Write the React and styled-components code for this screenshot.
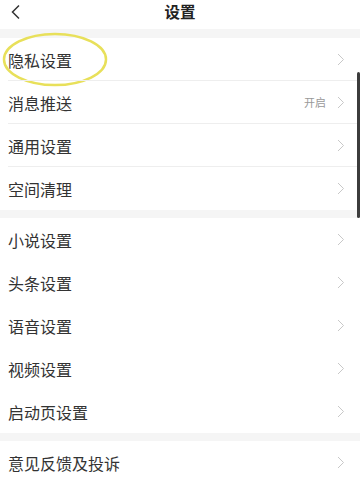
import React from "react";
import styled, { createGlobalStyle } from "styled-components";

const Global = createGlobalStyle`
  html, body { margin: 0; padding: 0; background: #fff; }
  body { font-family: "Noto Sans CJK SC", "Noto Sans", sans-serif; -webkit-font-smoothing: antialiased; }
  * { box-sizing: border-box; }
`;

const Page = styled.div`
  width: 360px;
  height: 483px;
  overflow: hidden;
  position: relative;
  background: #fff;
`;

const Header = styled.div`
  height: 29px;
  display: flex;
  align-items: center;
  justify-content: center;
  position: relative;
`;

const Back = styled.div`
  position: absolute;
  left: 10px;
  top: 4px;
  width: 12px;
  height: 16px;
  display: flex;
`;

const Title = styled.div`
  font-size: 15.5px;
  font-weight: 700;
  color: #222;
  line-height: 1;
  margin-top: -5px;
`;

const Band = styled.div`
  height: ${(p) => p.$h}px;
  background: #f5f5f5;
`;

const Section = styled.div`
  display: flex;
  flex-direction: column;
`;

const Row = styled.div`
  height: 43px;
  display: flex;
  align-items: center;
  padding: 0 15px 0 8px;
  position: relative;
  &::after {
    content: "";
    display: ${(p) => (p.$divider ? "block" : "none")};
    position: absolute;
    left: 8px;
    right: 0;
    bottom: 0;
    height: 1px;
    background: #eeeeee;
  }
`;

const Label = styled.div`
  flex: 1;
  font-size: 16px;
  color: #333;
  line-height: 1;
`;

const Value = styled.div`
  font-size: 11px;
  color: #999;
  margin-right: 11px;
  line-height: 1;
`;

const Chevron = styled.svg`
  width: 8px;
  height: 13px;
  display: block;
`;

const Circle = styled.svg`
  position: absolute;
  left: 2px;
  top: -6px;
  width: 106px;
  height: 55px;
  pointer-events: none;
`;

const ScrollThumb = styled.div`
  position: absolute;
  right: 0;
  top: 72px;
  width: 3px;
  height: 146px;
  background: #3c3c3c;
  border-radius: 2px;
`;

const sections = [
  [
    { label: "隐私设置", mark: true },
    { label: "消息推送", value: "开启" },
    { label: "通用设置" },
    { label: "空间清理" },
  ],
  [
    { label: "小说设置" },
    { label: "头条设置" },
    { label: "语音设置" },
    { label: "视频设置" },
    { label: "启动页设置" },
  ],
  [{ label: "意见反馈及投诉" }],
];

const ChevronIcon = () => (
  <Chevron viewBox="0 0 8 13">
    <path d="M1 1 L6.5 6.5 L1 12" fill="none" stroke="#c8c8c8" strokeWidth="1" />
  </Chevron>
);

export default function App() {
  return (
    <Page>
      <Global />
      <Header>
        <Back>
          <svg width="12" height="16" viewBox="0 0 12 16">
            <path d="M9 1.5 L2.5 8 L9 14.5" fill="none" stroke="#333" strokeWidth="1.5" />
          </svg>
        </Back>
        <Title>设置</Title>
      </Header>
      {sections.map((rows, si) => (
        <React.Fragment key={si}>
          <Band $h={si === 0 ? 9 : 8} />
          <Section>
            {rows.map((r, i) => (
              <Row key={r.label} $divider={si === 0 && i < rows.length - 1}>
                <Label>{r.label}</Label>
                {r.value && <Value>{r.value}</Value>}
                <ChevronIcon />
                {r.mark && (
                  <Circle viewBox="0 0 106 55">
                    <ellipse cx="53" cy="27.5" rx="51" ry="25.5" fill="none" stroke="#e8e05a" strokeWidth="2.5" />
                  </Circle>
                )}
              </Row>
            ))}
          </Section>
        </React.Fragment>
      ))}
      <ScrollThumb />
    </Page>
  );
}
